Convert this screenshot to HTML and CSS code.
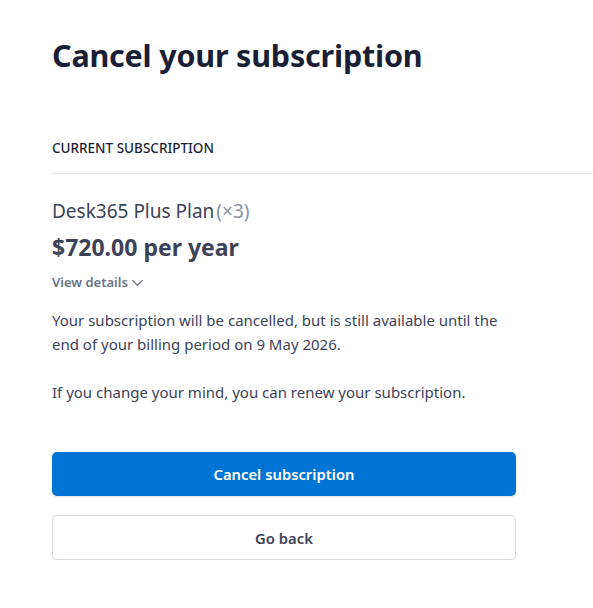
FILE: index.html
```html
<!DOCTYPE html>
<html lang="en">
<head>
<meta charset="utf-8">
<title>Cancel your subscription</title>
<link rel="stylesheet" href="styles.css">
</head>
<body>
<main class="page">
  <h1 class="title">Cancel your subscription</h1>
  <section class="section">
    <div class="section-head">Current subscription</div>
    <div class="plan">
      <div class="plan-name">Desk365 Plus Plan<span class="qty">(×3)</span></div>
      <div class="plan-price">$720.00 per year</div>
      <button class="details" type="button">View details
        <svg class="chev" width="13" height="13" viewBox="0 0 12 12" aria-hidden="true"><path d="M1.5 4l4.5 4.5L10.5 4" fill="none" stroke="currentColor" stroke-width="1.1" stroke-linecap="round" stroke-linejoin="round"/></svg>
      </button>
    </div>
    <div class="copy">
      <p>Your subscription will be cancelled, but is still available until the end of your billing period on 9 May 2026.</p>
      <p>If you change your mind, you can renew your subscription.</p>
    </div>
    <div class="actions">
      <button class="btn btn-primary" type="button">Cancel subscription</button>
      <button class="btn btn-secondary" type="button">Go back</button>
    </div>
  </section>
</main>
</body>
</html>
```
FILE: styles.css
```css
* { box-sizing: border-box; }
html, body { margin: 0; padding: 0; background: #fff; }
body {
  font-family: "Noto Sans", "Open Sans", "Liberation Sans", sans-serif;
  color: #3c4257;
  overflow: hidden;
}
.page {
  padding: 35px 0 0 52px;
}
.title {
  margin: 0;
  font-size: 30.5px;
  line-height: 40px;
  font-weight: 700;
  color: #1a1f36;
  letter-spacing: -0.2px;
}
.section { width: 464px; }
.section-head {
  margin-top: 64px;
  font-size: 13.5px;
  line-height: 18px;
  text-transform: uppercase;
  font-weight: 500;
  color: #1a1f36;
  padding-bottom: 16px;
  border-bottom: 1px solid #e3e8ee;
  margin-right: -77px;
}
.plan { padding-top: 24px; }
.plan-name {
  font-size: 19px;
  line-height: 26px;
  color: #3c4257;
}
.qty { color: #8792a2; margin-left: 2px; }
.plan-price {
  margin-top: 9px;
  font-size: 23px;
  line-height: 28px;
  font-weight: 700;
  color: #3c4257;
}
.details {
  margin-top: 11px;
  padding: 0;
  border: 0;
  background: none;
  font: inherit;
  font-size: 13px;
  line-height: 20px;
  font-weight: 600;
  color: #697386;
  display: flex;
  align-items: center;
  gap: 3px;
}
.copy { margin-top: 16px; }
.copy p {
  margin: 0 0 24px;
  font-size: 15px;
  line-height: 24px;
  color: #3c4257;
}
.actions {
  margin-top: 48px;
  display: flex;
  flex-direction: column;
  gap: 19px;
}
.btn {
  height: 44px;
  border-radius: 5px;
  font: inherit;
  font-size: 14.8px;
  font-weight: 600;
  width: 100%;
}
.btn-primary {
  background: #0074d4;
  color: #fff;
  border: 0;
  box-shadow: 0 1px 2px rgba(0,0,0,0.12);
}
.btn-secondary {
  height: 45px;
  background: #fff;
  color: #3c4257;
  border: 1px solid #d9dce1;
  box-shadow: 0 1px 1px rgba(0,0,0,0.08);
}
```
